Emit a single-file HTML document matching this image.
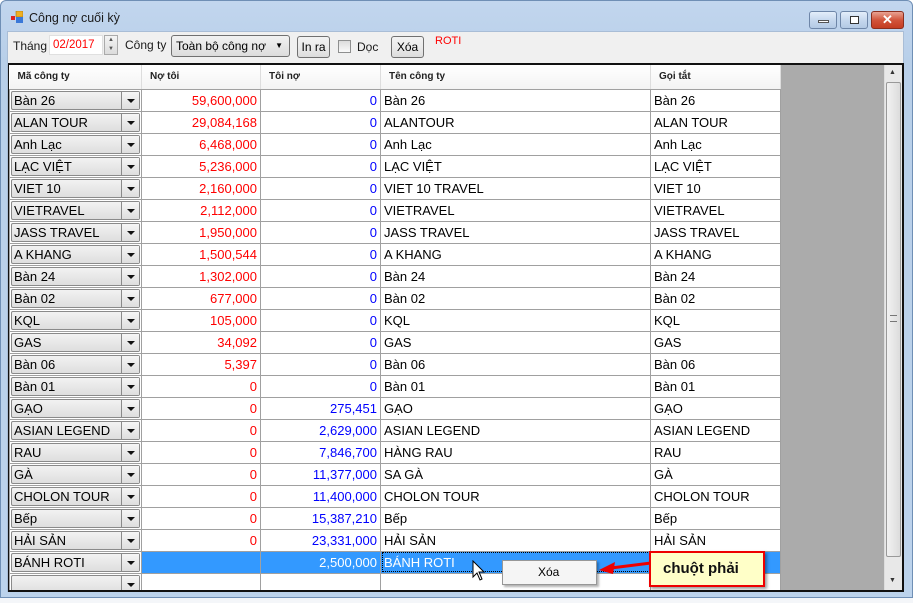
<!DOCTYPE html>
<html><head><meta charset="utf-8"><style>
*{margin:0;padding:0;box-sizing:border-box}
body{width:913px;height:603px;overflow:hidden;background:#fff;font-family:"Liberation Sans",Arial,sans-serif;position:relative}
.win{position:absolute;left:0;top:0;width:913px;height:598px;background:linear-gradient(#c2d6ee,#b8cfe9 60px,#bcd3ec);border:1px solid #6f8fb5;border-radius:6px 6px 0 0}
.bottom{position:absolute;left:0;top:598px;width:913px;height:5px;background:#f4f6f9;font-size:12px;color:#444}
.title{position:absolute;left:28px;top:10px;font-size:12.5px;color:#1a1a1a}
.ico{position:absolute;left:10px;top:10px;width:12px;height:12px}
.tb{position:absolute;top:10px;height:18px;border:1px solid #6e86a8;border-radius:3px;background:linear-gradient(#e4eefa,#c6d8ee 50%,#b3c9e4)}
.client{position:absolute;left:7px;top:31px;width:897px;height:561px;background:#f0f0f0;border:1px solid #a9bdd6}
.lbl{position:absolute;font-size:12px;color:#1a1a1a}
.btn{position:absolute;height:22px;border:1px solid #707070;border-radius:3px;background:linear-gradient(#f2f2f2,#ebebeb 50%,#dcdcdc);font-size:12px;text-align:center;line-height:20px}
.grid{position:absolute;left:8px;top:63px;width:896px;height:529px;border:2px solid #111;border-left-width:1px;background:#ababab;overflow:hidden}
table{border-collapse:collapse;table-layout:fixed;position:absolute;left:0;top:0;background:#fff}
td{height:22px;border:1px solid #a0a0a0;font-size:13px;white-space:nowrap;overflow:hidden;padding:0 3px}
th{height:24px;font-size:10px;font-weight:bold;text-align:left;padding-left:8px;background:linear-gradient(#fff,#f3f3f3);border-right:1px solid #ddd;border-bottom:1px solid #a0a0a0;color:#222}
td.c{padding:1px 1px;background:#fff}
.cb{position:relative;height:19px;border:1px solid #8a8a8a;background:linear-gradient(#f2f2f2,#dedede);border-radius:2px;line-height:17px;padding-left:2px;font-size:13px}
.cb i{position:absolute;right:0;top:0;width:18px;height:17px;border-left:1px solid #8a8a8a;background:linear-gradient(#f6f6f6,#dedede)}
.cb i:after{content:"";position:absolute;left:5px;top:7px;border-left:4px solid transparent;border-right:4px solid transparent;border-top:4px solid #111}
.r{text-align:right;color:#f00}.b{text-align:right;color:#00f}
tr.sel td.s{background:#3399ff;color:#fff}
.sb{position:absolute;left:875px;top:0;width:18px;height:525px;background:#e8e8e8;border-left:1px solid #ddd}
</style></head><body>
<div class="win">
<svg class="ico" viewBox="0 0 12 12"><rect x="0" y="5" width="4" height="4" fill="#d22"/><rect x="5" y="0" width="7" height="6" fill="#f0b020" stroke="#a87010" stroke-width=".6"/><rect x="5" y="6" width="7" height="6" fill="#3a78d8"/></svg>
<div class="title">Công nợ cuối kỳ</div>
<div class="tb" style="left:808px;width:28px"><div style="position:absolute;left:8px;top:8px;width:11px;height:3px;background:#fff;border:1px solid #555"></div></div>
<div class="tb" style="left:839px;width:28px"><div style="position:absolute;left:9px;top:4px;width:9px;height:8px;border:1px solid #333;background:#fff"></div></div>
<div class="tb" style="left:870px;width:33px;background:linear-gradient(#e8a393,#d2553c 50%,#c43c22);border-color:#8b2e1e;color:#fff;font-weight:bold;text-align:center;font-size:13px;line-height:16px">✕</div>
</div>
<div class="client"></div>
<div class="lbl" style="left:13px;top:39px">Tháng</div>
<div style="position:absolute;left:49px;top:35px;width:54px;height:20px;background:#fff;border:1px solid #e0e0e0;color:#f00;font-size:11.5px;line-height:18px;padding-left:3px">02/2017</div>
<div style="position:absolute;left:104px;top:35px;width:14px;height:20px;border:1px solid #aaa;background:linear-gradient(#f4f4f4,#dcdcdc);font-size:6px;text-align:center;line-height:9px;color:#555">▲<br>▼</div>
<div class="lbl" style="left:125px;top:38px">Công ty</div>
<div style="position:absolute;left:171px;top:35px;width:119px;height:22px;border:1px solid #707070;border-radius:3px;background:linear-gradient(#f2f2f2,#dcdcdc);font-size:12px;line-height:20px;padding-left:4px">Toàn bộ công nợ<span style="position:absolute;right:6px;top:0;font-size:8px">▼</span></div>
<div class="btn" style="left:297px;top:36px;width:33px">In ra</div>
<div style="position:absolute;left:338px;top:40px;width:13px;height:13px;border:1px solid #8e8f8f;background:linear-gradient(#dcdcdc,#fafafa)"></div>
<div class="lbl" style="left:357px;top:40px">Dọc</div>
<div class="btn" style="left:391px;top:36px;width:33px">Xóa</div>
<div class="lbl" style="left:435px;top:35px;color:#f00;font-size:11px">ROTI</div>

<div class="grid">
<table>
<colgroup><col style="width:132px"><col style="width:119px"><col style="width:120px"><col style="width:270px"><col style="width:130px"></colgroup>
<tr><th>Mã công ty</th><th>Nợ tôi</th><th>Tôi nợ</th><th>Tên công ty</th><th>Gọi tắt</th></tr>
<tr><td class="c"><div class="cb">Bàn 26<i></i></div></td><td class="r">59,600,000</td><td class="b">0</td><td>Bàn 26</td><td>Bàn 26</td></tr>
<tr><td class="c"><div class="cb">ALAN TOUR<i></i></div></td><td class="r">29,084,168</td><td class="b">0</td><td>ALANTOUR</td><td>ALAN TOUR</td></tr>
<tr><td class="c"><div class="cb">Anh Lạc<i></i></div></td><td class="r">6,468,000</td><td class="b">0</td><td>Anh Lạc</td><td>Anh Lạc</td></tr>
<tr><td class="c"><div class="cb">LẠC VIỆT<i></i></div></td><td class="r">5,236,000</td><td class="b">0</td><td>LẠC VIỆT</td><td>LẠC VIỆT</td></tr>
<tr><td class="c"><div class="cb">VIET 10<i></i></div></td><td class="r">2,160,000</td><td class="b">0</td><td>VIET 10 TRAVEL</td><td>VIET 10</td></tr>
<tr><td class="c"><div class="cb">VIETRAVEL<i></i></div></td><td class="r">2,112,000</td><td class="b">0</td><td>VIETRAVEL</td><td>VIETRAVEL</td></tr>
<tr><td class="c"><div class="cb">JASS TRAVEL<i></i></div></td><td class="r">1,950,000</td><td class="b">0</td><td>JASS TRAVEL</td><td>JASS TRAVEL</td></tr>
<tr><td class="c"><div class="cb">A KHANG<i></i></div></td><td class="r">1,500,544</td><td class="b">0</td><td>A KHANG</td><td>A KHANG</td></tr>
<tr><td class="c"><div class="cb">Bàn 24<i></i></div></td><td class="r">1,302,000</td><td class="b">0</td><td>Bàn 24</td><td>Bàn 24</td></tr>
<tr><td class="c"><div class="cb">Bàn 02<i></i></div></td><td class="r">677,000</td><td class="b">0</td><td>Bàn 02</td><td>Bàn 02</td></tr>
<tr><td class="c"><div class="cb">KQL<i></i></div></td><td class="r">105,000</td><td class="b">0</td><td>KQL</td><td>KQL</td></tr>
<tr><td class="c"><div class="cb">GAS<i></i></div></td><td class="r">34,092</td><td class="b">0</td><td>GAS</td><td>GAS</td></tr>
<tr><td class="c"><div class="cb">Bàn 06<i></i></div></td><td class="r">5,397</td><td class="b">0</td><td>Bàn 06</td><td>Bàn 06</td></tr>
<tr><td class="c"><div class="cb">Bàn 01<i></i></div></td><td class="r">0</td><td class="b">0</td><td>Bàn 01</td><td>Bàn 01</td></tr>
<tr><td class="c"><div class="cb">GẠO<i></i></div></td><td class="r">0</td><td class="b">275,451</td><td>GẠO</td><td>GẠO</td></tr>
<tr><td class="c"><div class="cb">ASIAN LEGEND<i></i></div></td><td class="r">0</td><td class="b">2,629,000</td><td>ASIAN LEGEND</td><td>ASIAN LEGEND</td></tr>
<tr><td class="c"><div class="cb">RAU<i></i></div></td><td class="r">0</td><td class="b">7,846,700</td><td>HÀNG RAU</td><td>RAU</td></tr>
<tr><td class="c"><div class="cb">GÀ<i></i></div></td><td class="r">0</td><td class="b">11,377,000</td><td>SA GÀ</td><td>GÀ</td></tr>
<tr><td class="c"><div class="cb">CHOLON TOUR<i></i></div></td><td class="r">0</td><td class="b">11,400,000</td><td>CHOLON TOUR</td><td>CHOLON TOUR</td></tr>
<tr><td class="c"><div class="cb">Bếp<i></i></div></td><td class="r">0</td><td class="b">15,387,210</td><td>Bếp</td><td>Bếp</td></tr>
<tr><td class="c"><div class="cb">HẢI SẢN<i></i></div></td><td class="r">0</td><td class="b">23,331,000</td><td>HẢI SẢN</td><td>HẢI SẢN</td></tr>
<tr class="sel"><td class="c"><div class="cb">BÁNH ROTI<i></i></div></td><td class="s"></td><td class="s" style="text-align:right">2,500,000</td><td class="s" style="outline:1px dotted #000;outline-offset:-2px">BÁNH ROTI</td><td class="s"></td></tr>
<tr><td class="c"><div class="cb">&nbsp;<i></i></div></td><td></td><td></td><td></td><td></td></tr>
</table>
<div class="sb">
<div style="position:absolute;left:4px;top:4px;font-size:7px;color:#333">▲</div>
<div style="position:absolute;left:1px;top:17px;width:15px;height:475px;border:1px solid #999;border-radius:2px;background:linear-gradient(90deg,#f2f2f2,#dcdcdc)"><div style="position:absolute;left:3px;top:232px;width:7px;height:7px;border-top:1px solid #777;border-bottom:1px solid #777"></div></div>
<div style="position:absolute;left:4px;top:512px;font-size:7px;color:#333">▼</div>
</div>
</div>

<div style="position:absolute;left:502px;top:560px;width:95px;height:25px;background:#f5f5f5;border:1px solid #979797;box-shadow:2px 2px 2px rgba(0,0,0,.3);font-size:12px;line-height:23px;padding-left:35px">Xóa</div>
<svg style="position:absolute;left:472px;top:560px" width="20" height="24" viewBox="0 0 20 24"><path d="M1 1 L1 17 L5 13 L8 20 L10 19 L7 12 L12 12 Z" fill="#fff" stroke="#000" stroke-width="1"/></svg>
<svg style="position:absolute;left:597px;top:560px" width="56" height="16" viewBox="0 0 56 16"><path d="M54 3 L14 8" stroke="#e00" stroke-width="3"/><path d="M2 10 L18 2 L16 14 Z" fill="#e00"/></svg>
<div style="position:absolute;left:649px;top:551px;width:116px;height:36px;background:#ffffc8;border:2px solid #e00;box-shadow:2px 2px 3px rgba(0,0,0,.4);font-size:15px;font-weight:bold;line-height:32px;padding-left:12px;color:#111">chuột phải</div>
<div class="bottom"></div>
</body></html>
